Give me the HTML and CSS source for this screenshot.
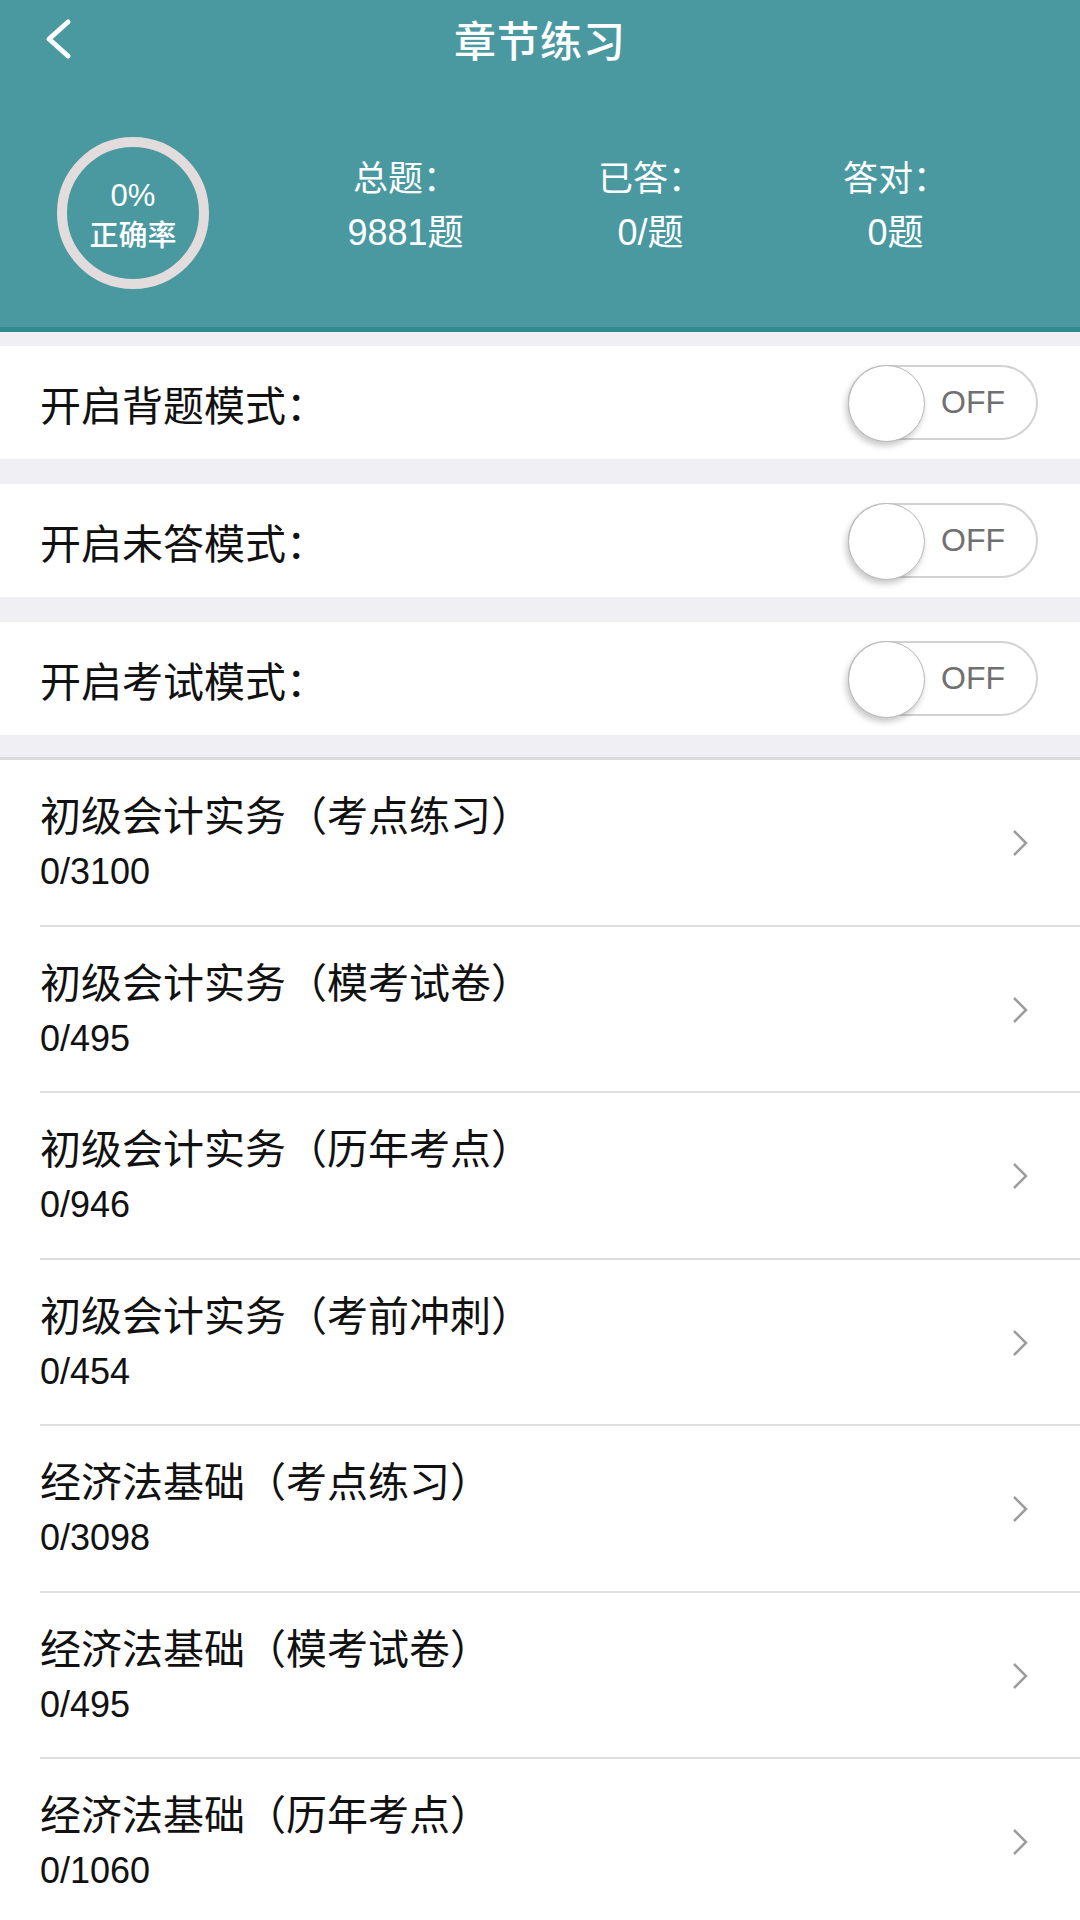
FILE: index.html
```html
<!DOCTYPE html>
<html lang="zh-CN">
<head>
  <meta charset="UTF-8">
  <title>章节练习</title>
  <link rel="stylesheet" href="styles.css">
</head>
<body>
  <!-- 顶部 -->
  <div class="header">
    <div class="nav">
      <div class="back">
        <svg width="32" height="42" viewBox="0 0 32 42">
          <polyline points="24,4 5,21 24,38" fill="none" stroke="#fff" stroke-width="5" stroke-linecap="round" stroke-linejoin="round"/>
        </svg>
      </div>
      <div class="title">章节练习</div>
      <div></div>
    </div>
    <div class="summary">
      <div class="ring">
        <div>0%</div>
        <div>正确率</div>
      </div>
      <div class="stats">
        <div class="stat">
          <div>总题：</div>
          <div>9881题</div>
        </div>
        <div class="stat">
          <div>已答：</div>
          <div>0/题</div>
        </div>
        <div class="stat">
          <div>答对：</div>
          <div>0题</div>
        </div>
      </div>
    </div>
  </div>

  <!-- 模式开关 -->
  <div class="modes">
    <div class="mode">
      <span>开启背题模式：</span>
      <div class="switch"><div class="knob"></div><span>OFF</span></div>
    </div>
    <div class="mode">
      <span>开启未答模式：</span>
      <div class="switch"><div class="knob"></div><span>OFF</span></div>
    </div>
    <div class="mode">
      <span>开启考试模式：</span>
      <div class="switch"><div class="knob"></div><span>OFF</span></div>
    </div>
  </div>

  <!-- 章节列表 -->
  <div class="list" id="list"></div>

  <script>
    const chapters = [
      { name: '初级会计实务（考点练习）', done: 0, total: 3100 },
      { name: '初级会计实务（模考试卷）', done: 0, total: 495 },
      { name: '初级会计实务（历年考点）', done: 0, total: 946 },
      { name: '初级会计实务（考前冲刺）', done: 0, total: 454 },
      { name: '经济法基础（考点练习）', done: 0, total: 3098 },
      { name: '经济法基础（模考试卷）', done: 0, total: 495 },
      { name: '经济法基础（历年考点）', done: 0, total: 1060 }
    ];

    const list = document.getElementById('list');
    chapters.forEach(c => {
      const item = document.createElement('div');
      item.className = 'item';
      item.innerHTML = `
        <div class="item-text">
          <div class="item-name">${c.name}</div>
          <div class="item-count">${c.done}/${c.total}</div>
        </div>
        <svg class="arrow" width="20" height="30" viewBox="0 0 20 30">
          <polyline points="4,3 16,15 4,27" fill="none" stroke="#9c9c9c" stroke-width="2.5"/>
        </svg>`;
      list.appendChild(item);
    });
  </script>
</body>
</html>
```

FILE: styles.css
```css
body {
  margin: 0;
  padding: 0;
  font-family: "Liberation Sans", "Noto Sans CJK SC", sans-serif;
  background: #fff;
  color: #111;
}
.header {
  height: 327px;
  background: #4a99a1;
  border-bottom: 5px solid #2f8b90;
  color: #fff;
}
.nav {
  height: 80px;
  display: grid;
  grid-template-columns: 1fr auto 1fr;
  align-items: center;
}
.back {
  padding-left: 44px;
  height: 42px;
  margin-top: -2px;
}
.title {
  font-size: 42px;
  font-weight: 500;
  letter-spacing: 1px;
  margin-top: -3px;
}
.summary {
  display: flex;
  align-items: flex-start;
  padding: 57px 62px 0 57px;
}
.ring {
  width: 152px;
  height: 152px;
  box-sizing: border-box;
  border: 10px solid #e2dcdc;
  border-radius: 50%;
  display: flex;
  flex-direction: column;
  justify-content: center;
  align-items: center;
  font-size: 29px;
  font-weight: 500;
  line-height: 40px;
  padding-top: 6px;
}
.ring div:first-child {
  font-size: 31px;
}
.stats {
  flex: 1;
  margin-left: 74px;
  margin-top: 15px;
  display: grid;
  grid-template-columns: repeat(3, 1fr);
}
.stat {
  text-align: center;
  font-size: 35px;
  line-height: 54px;
}
.stat div:last-child {
  font-size: 36px;
}
.modes {
  background: #efeff4;
  padding-top: 14px;
  border-bottom: 3px solid #dcdcdc;
}
.mode {
  height: 113px;
  background: #fff;
  display: flex;
  align-items: center;
  justify-content: space-between;
  padding: 0 42px 0 40px;
  margin-bottom: 25px;
  font-size: 41px;
}
.mode:last-child {
  margin-bottom: 22px;
}
.switch {
  position: relative;
  width: 190px;
  height: 75px;
  box-sizing: border-box;
  border: 2px solid #d2d2d2;
  border-radius: 38px;
  display: flex;
  align-items: center;
  justify-content: flex-end;
  padding-right: 31px;
  font-size: 32px;
  color: #707070;
}
.knob {
  position: absolute;
  left: -2px;
  top: -2px;
  width: 77px;
  height: 77px;
  box-sizing: border-box;
  border-radius: 50%;
  background: #fff;
  border: 1px solid #b8b8b8;
  box-shadow: -2px 4px 6px rgba(0,0,0,0.22);
}
.item {
  height: 164.5px;
  margin-left: 40px;
  border-bottom: 2px solid #dedede;
  display: flex;
  align-items: center;
  justify-content: space-between;
  padding-right: 50px;
}
.item-text {
  margin-top: 2px;
}
.item-name {
  font-size: 41px;
  line-height: 50px;
}
.item-count {
  font-size: 36px;
  line-height: 44px;
  margin-top: 8px;
}
.arrow {
  display: block;
  margin-top: 2px;
}
```
